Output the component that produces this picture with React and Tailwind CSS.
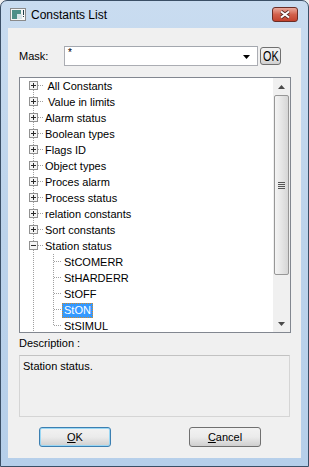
const rootItems = [
  " All Constants",
  " Value in limits",
  "Alarm status",
  "Boolean types",
  "Flags ID",
  "Object types",
  "Proces alarm",
  "Process status",
  "relation constants",
  "Sort constants",
];

const stationChildren = ["StCOMERR", "StHARDERR", "StOFF", "StON", "StSIMUL"];

function ExpandBox({ open }) {
  return (
    <g>
      <rect x="9.5" y="3.5" width="8" height="8" fill="#f4f4f4" stroke="#919191" />
      <line x1="11" y1="7.5" x2="16" y2="7.5" stroke="#2a2a2a" />
      {!open && <line x1="13.5" y1="5" x2="13.5" y2="10" stroke="#2a2a2a" />}
    </g>
  );
}

function RootRow({ label, first, open }) {
  return (
    <div className="flex h-[16px] items-center">
      <svg width="25" height="16" className="shrink-0">
        <line
          x1="13.5"
          y1={first ? 8 : 0}
          x2="13.5"
          y2="16"
          stroke="#a0a0a0"
          strokeDasharray="1 1"
        />
        <line x1="18" y1="7.5" x2="24" y2="7.5" stroke="#a0a0a0" strokeDasharray="1 1" />
        <ExpandBox open={open} />
      </svg>
      <span className="whitespace-pre leading-[16px]">{label}</span>
    </div>
  );
}

function ChildRow({ label, last, selected }) {
  return (
    <div className="flex h-[16px] items-center">
      <svg width="42" height="16" className="shrink-0">
        <line x1="13.5" y1="0" x2="13.5" y2="16" stroke="#a0a0a0" strokeDasharray="1 1" />
        <line
          x1="33.5"
          y1="0"
          x2="33.5"
          y2={last ? 8 : 16}
          stroke="#a0a0a0"
          strokeDasharray="1 1"
        />
        <line x1="34" y1="7.5" x2="42" y2="7.5" stroke="#a0a0a0" strokeDasharray="1 1" />
      </svg>
      <span
        className={
          selected
            ? "h-[15px] px-[1px] leading-[13px] bg-[#3399ff] text-white border border-dotted border-[#d08a2c]"
            : "px-[2px] leading-[16px]"
        }
      >
        {label}
      </span>
    </div>
  );
}

function ScrollArrow({ up }) {
  return (
    <div className="flex h-[17px] items-center justify-center">
      <svg width="7" height="4">
        {up ? (
          <polygon points="0,4 7,4 3.5,0" fill="#4a4a4a" />
        ) : (
          <polygon points="0,0 7,0 3.5,4" fill="#4a4a4a" />
        )}
      </svg>
    </div>
  );
}

function Scrollbar() {
  return (
    <div className="flex w-[17px] flex-col bg-[#f0f0f0]">
      <ScrollArrow up />
      <div className="flex-1 px-[1px]">
        <div className="flex h-[180px] items-center justify-center rounded-[2px] border border-[#979797] bg-gradient-to-r from-[#f4f4f4] via-[#e6e6e6] to-[#d6d6d6]">
          <div className="flex flex-col gap-[1px]">
            <div className="h-[1px] w-[7px] bg-[#555]" />
            <div className="h-[1px] w-[7px] bg-[#555]" />
            <div className="h-[1px] w-[7px] bg-[#555]" />
            <div className="h-[1px] w-[7px] bg-[#555]" />
          </div>
        </div>
      </div>
      <ScrollArrow />
    </div>
  );
}

function WinButton({ children, isDefault, className }) {
  return (
    <div
      className={
        "flex items-center justify-center rounded-[3px] border bg-gradient-to-b from-[#f2f2f2] via-[#ebebeb] to-[#cfcfcf] " +
        (isDefault ? "border-[#3c7fb1] shadow-[inset_0_0_0_1px_#9ad7f4] " : "border-[#707070] ") +
        className
      }
    >
      {children}
    </div>
  );
}

export default function App() {
  return (
    <div className="h-[467px] w-[309px] bg-[#f0f0f0] font-['Liberation_Sans',Arial,sans-serif] text-[11px] text-black">
      <div className="flex h-[467px] w-[309px] flex-col rounded-t-[7px] border border-[#3b4f66] bg-gradient-to-b from-[#c9dcf0] via-[#bcd3eb] to-[#b6cfea]">
        {/* title bar */}
        <div className="flex h-[27px] items-center pl-[9px] pr-[10px]">
          <svg width="16" height="13" className="shrink-0">
            <rect x="0.5" y="0.5" width="15" height="12" fill="#f6f6f6" stroke="#8a8a8a" />
            <rect x="2" y="2" width="9" height="9" fill="#4e8f88" />
            <rect x="7" y="6" width="5" height="5" fill="#d8e4e8" />
            <rect x="13" y="2" width="1" height="5" fill="#1f3c4a" />
            <rect x="13" y="8" width="1" height="1" fill="#1f3c4a" />
          </svg>
          <span className="ml-[5px] text-[12px] leading-[16px] text-black">Constants List</span>
          <div className="ml-auto flex h-[15px] w-[26px] items-center justify-center rounded-[3px] border border-[#6a2d26] bg-gradient-to-b from-[#e9a99c] via-[#d2604b] to-[#c2412c]">
            <svg width="12" height="9">
              <path d="M2 1.5 L10 7.5 M10 1.5 L2 7.5" stroke="#5a2a22" strokeWidth="3.6" />
              <path d="M2 1.5 L10 7.5 M10 1.5 L2 7.5" stroke="#ffffff" strokeWidth="2" />
            </svg>
          </div>
        </div>

        {/* client area */}
        <div className="mx-[7px] flex h-[430px] flex-col bg-[#f0f0f0]">
          <div className="mt-[18px] flex h-[20px] items-center">
            <span className="w-[56px] pl-[11px]">Mask:</span>
            <div className="relative flex h-[20px] w-[194px] items-start border border-[#abadb3] border-t-[#a3a7ae] bg-white pl-[3px]">
              <span className="text-[10px] leading-[12px]">*</span>
              <svg width="7" height="4" className="absolute right-[7px] top-[8px]">
                <polygon points="0,0 7,0 3.5,4" fill="#000" />
              </svg>
            </div>
            <WinButton className="ml-[2px] h-[18px] w-[21px]">
              <span className="inline-block scale-x-[0.72] text-[15px] leading-[16px]">OK</span>
            </WinButton>
          </div>

          {/* tree */}
          <div className="ml-[11px] mt-[11px] flex h-[256px] w-[272px] border border-[#828790] bg-white">
            <div className="flex-1 overflow-hidden">
              {rootItems.map((item, i) => (
                <RootRow key={item} label={item} first={i === 0} />
              ))}
              <RootRow label="Station status" open />
              {stationChildren.map((c, i) => (
                <ChildRow
                  key={c}
                  label={c}
                  selected={c === "StON"}
                  last={i === stationChildren.length - 1}
                />
              ))}
            </div>
            <Scrollbar />
          </div>

          <div className="h-[22px] pl-[11px] pt-[3px] leading-[14px]">Description :</div>

          <div className="ml-[11px] h-[62px] w-[271px] border border-[#d5d5d5] border-t-[#c2c2c2] bg-[#f0f0f0] pl-[3px] pt-[3px] leading-[14px]">
            Station status.
          </div>

          <div className="mt-[10px] flex">
            <WinButton isDefault className="ml-[31px] h-[20px] w-[72px]">
              <span>
                <span className="underline">O</span>K
              </span>
            </WinButton>
            <WinButton className="ml-[78px] h-[20px] w-[72px]">
              <span>
                <span className="underline">C</span>ancel
              </span>
            </WinButton>
          </div>
        </div>
      </div>
    </div>
  );
}
